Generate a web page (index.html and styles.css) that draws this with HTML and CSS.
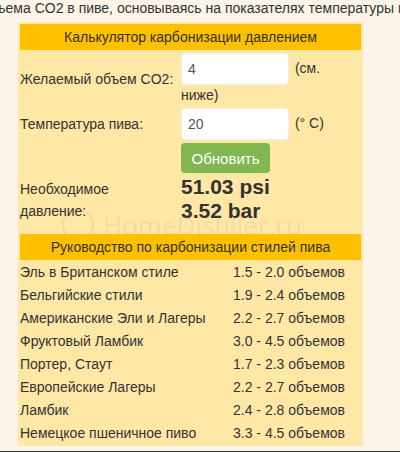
FILE: index.html
```html
<!DOCTYPE html>
<html lang="ru">
<head>
    <meta charset="UTF-8">
    <meta name="viewport" content="width=device-width, initial-scale=1.0">
    <title>Калькулятор карбонизации давлением</title>
    <link rel="stylesheet" href="styles.css">
</head>
<body>

    <div class="intro">
        <p class="intro-text">Определите давление для нужного объема CO2 в пиве, основываясь на показателях температуры пива.</p>
    </div>

    <div class="calc">
        <div class="calc-head">Калькулятор карбонизации давлением</div>

        <div class="calc-grid">
            <div class="cell label">Желаемый объем CO2:</div>
            <div class="cell field">
                <input type="text" id="volumes" value="4"> (см. ниже)
            </div>

            <div class="cell label">Температура пива:</div>
            <div class="cell field">
                <input type="text" id="temp" value="20"> (° C)
            </div>

            <div class="cell"></div>
            <div class="cell btn-cell">
                <button onclick="calcPressure()">Обновить</button>
            </div>

            <div class="cell label result-label">Необходимое давление:</div>
            <div class="cell result">
                <div><span id="psi">51.03</span> psi</div>
                <div><span id="bar">3.52</span> bar</div>
            </div>
        </div>

        <div class="watermark">
            <span class="wm-ring"></span>HomeDistiller.ru
        </div>

        <div class="calc-head">Руководство по карбонизации стилей пива</div>

        <div class="guide">
            <div class="cell">Эль в Британском стиле</div>
            <div class="cell">1.5 - 2.0 объемов</div>
            <div class="cell">Бельгийские стили</div>
            <div class="cell">1.9 - 2.4 объемов</div>
            <div class="cell">Американские Эли и Лагеры</div>
            <div class="cell">2.2 - 2.7 объемов</div>
            <div class="cell">Фруктовый Ламбик</div>
            <div class="cell">3.0 - 4.5 объемов</div>
            <div class="cell">Портер, Стаут</div>
            <div class="cell">1.7 - 2.3 объемов</div>
            <div class="cell">Европейские Лагеры</div>
            <div class="cell">2.2 - 2.7 объемов</div>
            <div class="cell">Ламбик</div>
            <div class="cell">2.4 - 2.8 объемов</div>
            <div class="cell">Немецкое пшеничное пиво</div>
            <div class="cell">3.3 - 4.5 объемов</div>
        </div>
    </div>

    <div class="page-rule"></div>

    <script>
        // pressure needed for given volumes of CO2 at temperature (Celsius)
        function calcPressure() {
            const vols = parseFloat(document.getElementById("volumes").value) || 0;
            const tempC = parseFloat(document.getElementById("temp").value) || 0;
            const tempF = tempC * 9 / 5 + 32;
            let psi = -16.6999 - 0.0101059 * tempF + 0.00116512 * tempF * tempF
                + 0.173354 * tempF * vols + 4.24267 * vols - 0.0684226 * vols * vols;
            if (psi < 0) psi = 0;
            document.getElementById("psi").innerText = psi.toFixed(2);
            document.getElementById("bar").innerText = (psi * 0.0689476).toFixed(2);
        }
    </script>

</body>
</html>
```

FILE: styles.css
```css
body {
    font-family: "Liberation Sans", Arial, sans-serif;
    font-size: 14px;
    color: #333;
    background-color: #fcf3e9;
    margin: 0;
    padding: 0;
}
.intro {
    overflow: hidden;
    white-space: nowrap;
    height: 22px;
}
.intro-text {
    margin: 0 0 0 -252px;
    font-size: 14px;
    line-height: 17px;
}
.calc {
    position: relative;
    width: 341px;
    margin-left: 18px;
    padding: 2px;
    background-color: #ffe7a6;
}
.calc-head {
    position: relative;
    z-index: 1;
    background-color: #ffc000;
    text-align: center;
    line-height: 26px;
}
.calc-grid {
    display: grid;
    grid-template-columns: 158px 1fr;
    gap: 2px;
    margin: 2px 0;
}
.cell {
    padding: 0;
}
.label {
    display: flex;
    align-items: center;
}
.field {
    line-height: 20px;
    padding: 1px 0 0 1px;
}
.field input {
    width: 108px;
    height: 32px;
    box-sizing: border-box;
    padding: 6px;
    border: 1px solid #eee;
    border-radius: 4px;
    font-family: inherit;
    font-size: 14px;
    color: #555;
    vertical-align: middle;
    margin-right: 2px;
}
.btn-cell {
    padding-top: 1px;
}
button {
    display: block;
    background-color: #80b751;
    color: white;
    width: 89px;
    height: 30px;
    border: none;
    border-radius: 4px;
    font-family: inherit;
    font-size: 15px;
    margin-left: 1px;
    cursor: pointer;
}
button:hover {
    background-color: #72a845;
}
.result-label {
    align-items: flex-start;
    line-height: 22px;
    padding-top: 3px;
}
.result {
    font-size: 21px;
    font-weight: bold;
    line-height: 24px;
    padding: 0 1px 9px;
}
.watermark {
    position: absolute;
    left: 44px;
    top: 185px;
    font-family: "Open Sans", sans-serif;
    font-size: 26px;
    color: rgba(120, 110, 90, 0.1);
    display: flex;
    align-items: center;
    gap: 9px;
}
.wm-ring {
    width: 28px;
    height: 28px;
    border: 2px solid rgba(120, 110, 90, 0.1);
    border-radius: 50%;
}
.guide {
    display: grid;
    grid-template-columns: 211px 1fr;
    gap: 2px;
    margin-top: 2px;
}
.guide .cell {
    line-height: 19px;
    padding: 1px 0;
}
.page-rule {
    margin-top: 5px;
    border-top: 2px solid #333;
}
```
